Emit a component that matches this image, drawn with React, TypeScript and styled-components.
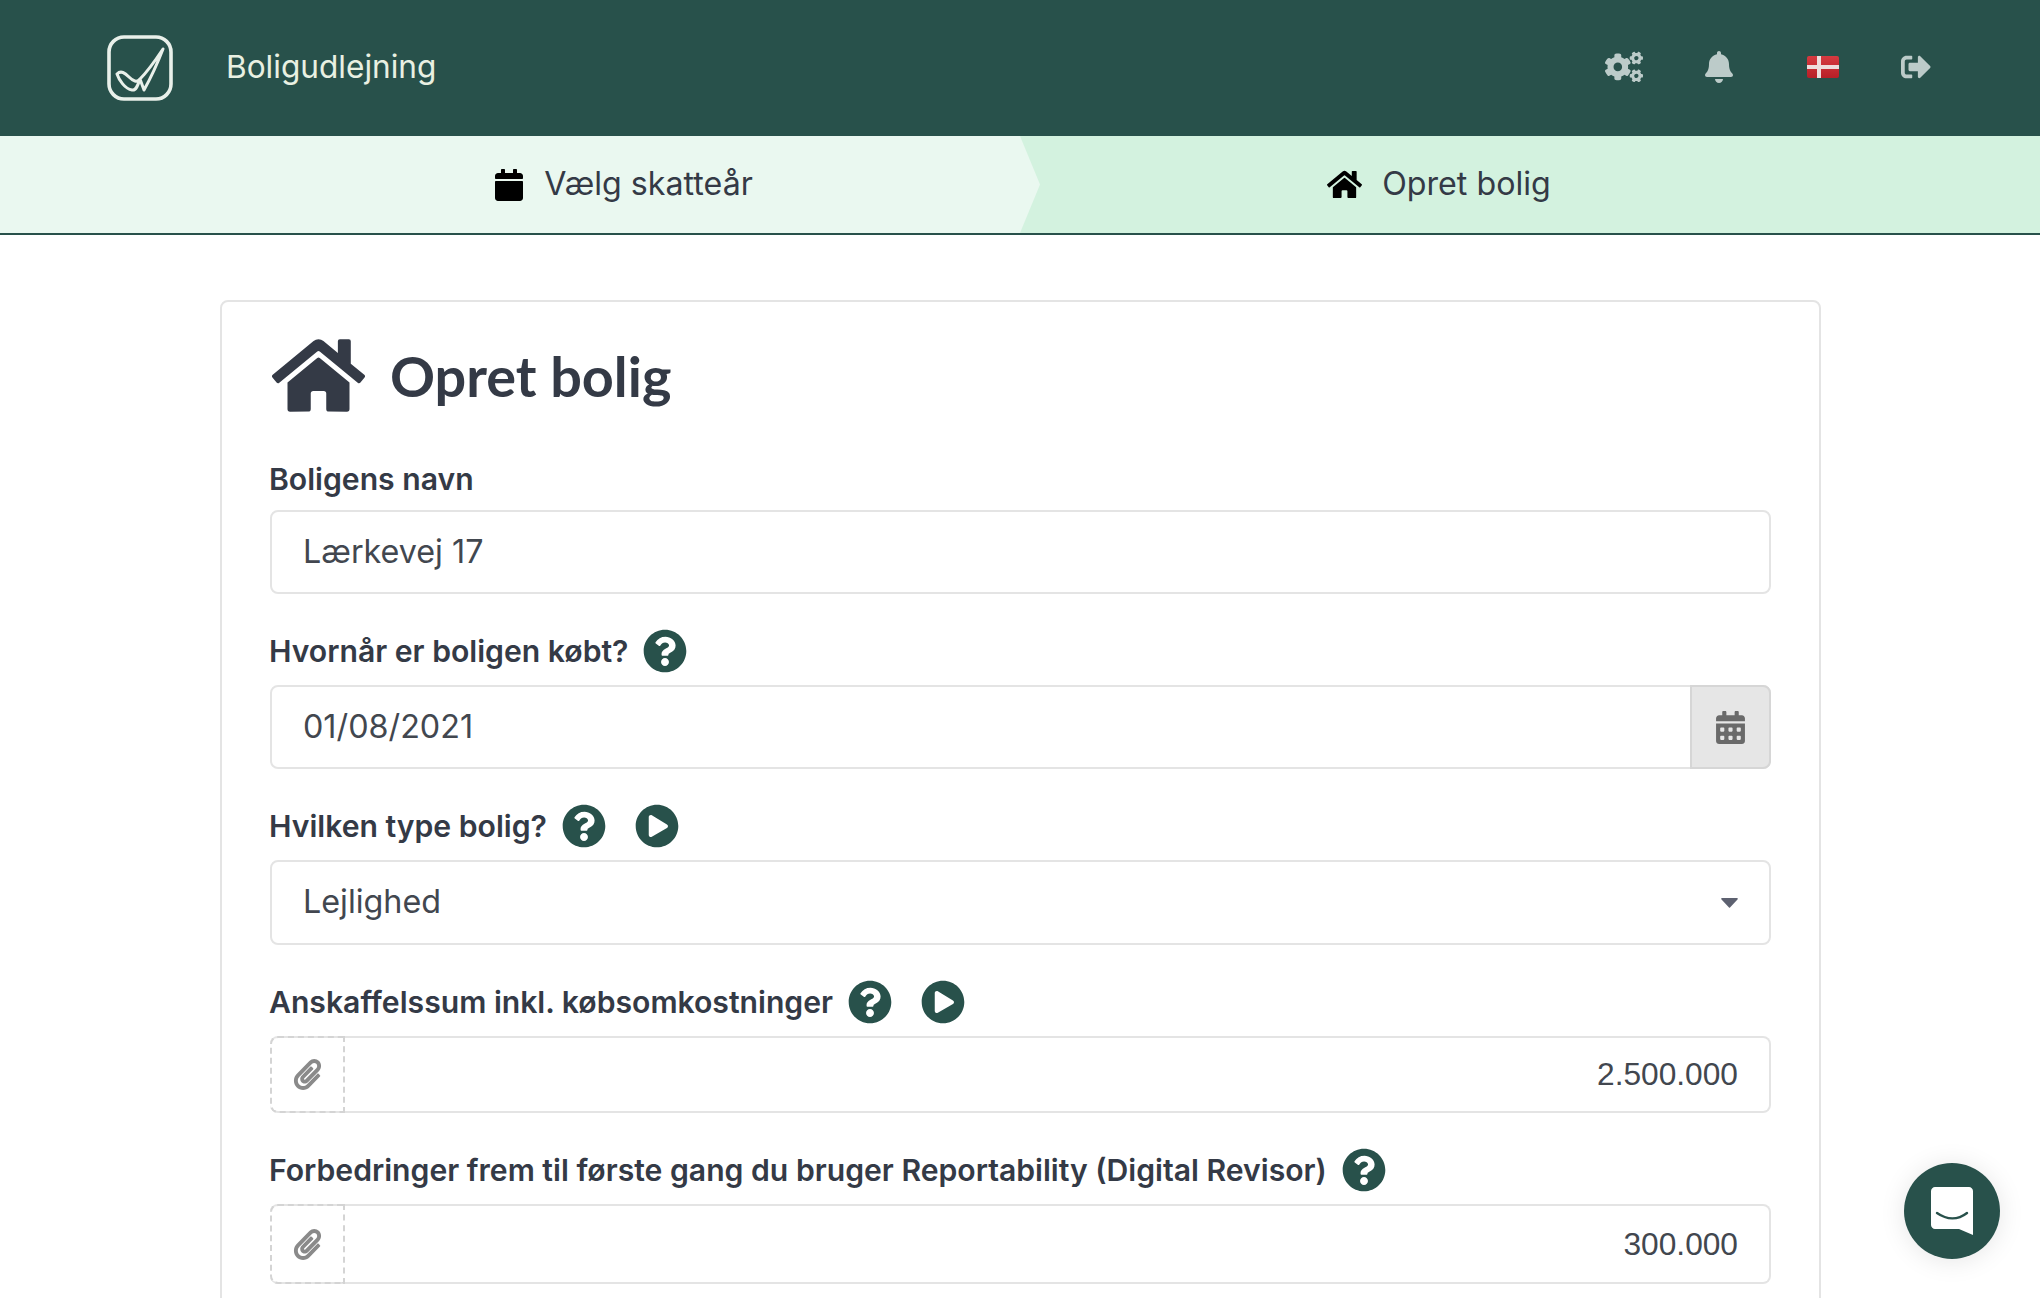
import React from 'react'
import styled, { createGlobalStyle } from 'styled-components'
import {
    FaBell,
    FaCalendar,
    FaCalendarAlt,
    FaCogs,
    FaHome,
    FaPaperclip,
    FaPlayCircle,
    FaQuestionCircle,
    FaSignOutAlt
} from 'react-icons/fa'

const GREEN = '#28514b'
const INK = '#343a46'

const Logo: React.FC = () => (
    <svg width="66" height="66" viewBox="0 0 66 66" fill="none" stroke="#e9f0ea">
        <rect x="2" y="2" width="62" height="62" rx="15" strokeWidth="3.6" />
        <path
            d="M56 14 C48 26 40 37 33 44 L37 55 C42 46 51 27 56 14 Z M10 39 C14 35 18 38 22 42 C26 46 30 48 33 44 M10 39 C12 45 18 54 25 55 C29 56 31 50 33 44"
            strokeWidth="3"
            strokeLinejoin="round"
            strokeLinecap="round"
        />
    </svg>
)

const Flag: React.FC = () => (
    <svg width="32" height="22" viewBox="0 0 32 22">
        <defs>
            <linearGradient id="flag-gloss" x1="0" y1="0" x2="0" y2="1">
                <stop offset="0" stopColor="#d63a40" />
                <stop offset="1" stopColor="#b81f27" />
            </linearGradient>
        </defs>
        <rect width="32" height="22" rx="2" fill="url(#flag-gloss)" />
        <rect x="10" width="4" height="22" fill="#eedcdc" />
        <rect y="9" width="32" height="4" fill="#eedcdc" />
    </svg>
)

const ChatIcon: React.FC = () => (
    <svg width="42" height="48" viewBox="0 0 42 48">
        <path
            d="M4 0H38C40 0 42 2 42 4V48L28 42H4C2 42 0 40 0 38V4C0 2 2 0 4 0Z"
            fill="#fff"
        />
        <path
            d="M6 26C16 33 27 33 36 26"
            fill="none"
            stroke={GREEN}
            strokeWidth="2.4"
            strokeLinecap="round"
        />
    </svg>
)

const Caret: React.FC = () => (
    <svg width="17" height="10" viewBox="0 0 17 10">
        <path d="M1 0H16C17 0 17 1 16.500 1.500L9 9.500C8.700 9.800 8.300 9.800 8 9.500L0.500 1.500C0 1 0 0 1 0Z" fill="#5d6170" />
    </svg>
)

const FieldLabel: React.FC<{
    text: string,
    help?: boolean,
    play?: boolean
}> = ({text, help, play}) => (
    <LabelRow $tall={help || play}>
        <LabelText>{text}</LabelText>
        {help && <HelpIcon size={44} />}
        {play && <PlayIcon size={44} />}
    </LabelRow>
)

const AmountField: React.FC<{ value: string, height: number }> = ({value, height}) => (
    <AmountBox $height={height}>
        <AttachBox><FaPaperclip size={31} /></AttachBox>
        <AmountValue>{value}</AmountValue>
    </AmountBox>
)

const App: React.FC = () => {
    return (
        <>
            <GlobalStyle />
            <Page>
                <Header>
                    <Logo />
                    <AppTitle>Boligudlejning</AppTitle>
                    <HeaderIcons>
                        <FaCogs size={38} />
                        <FaBell size={32} />
                        <FlagSlot><Flag /></FlagSlot>
                        <SignOutIcon size={30} />
                    </HeaderIcons>
                </Header>

                <Steps>
                    <Step $first>
                        <FaCalendar size={32} />
                        <StepLabel>Vælg skatteår</StepLabel>
                    </Step>
                    <Step>
                        <FaHome size={35} />
                        <StepLabel>Opret bolig</StepLabel>
                    </Step>
                </Steps>

                <Card>
                    <Heading>
                        <FaHome size={93} />
                        <HeadingText>Opret bolig</HeadingText>
                    </Heading>

                    <Field>
                        <FieldLabel text="Boligens navn" />
                        <Control>
                            <ControlValue>Lærkevej 17</ControlValue>
                        </Control>
                    </Field>

                    <Field>
                        <FieldLabel text="Hvornår er boligen købt?" help />
                        <Control>
                            <ControlValue>01/08/2021</ControlValue>
                            <CalendarAddon><FaCalendarAlt size={33} /></CalendarAddon>
                        </Control>
                    </Field>

                    <Field>
                        <FieldLabel text="Hvilken type bolig?" help play />
                        <Control $height={85}>
                            <ControlValue>Lejlighed</ControlValue>
                            <CaretSlot><Caret /></CaretSlot>
                        </Control>
                    </Field>

                    <Field>
                        <FieldLabel text="Anskaffelssum inkl. købsomkostninger" help play />
                        <AmountField value="2.500.000" height={77} />
                    </Field>

                    <Field>
                        <FieldLabel text="Forbedringer frem til første gang du bruger Reportability (Digital Revisor)" help />
                        <AmountField value="300.000" height={80} />
                    </Field>
                </Card>

                <ChatButton><ChatIcon /></ChatButton>
            </Page>
        </>
    )
}

export default App

const GlobalStyle = createGlobalStyle`
    html, body {
        margin: 0;
        padding: 0;
        height: 100%;
        overflow: hidden;
        background: #fff;
    }
    body {
        font-family: Inter, "Liberation Sans", sans-serif;
        color: ${INK};
    }
`

const Page = styled.div`
    height: 1298px;
    overflow: hidden;
`

const Header = styled.header`
    height: 136px;
    background: ${GREEN};
    display: flex;
    align-items: center;
    padding: 0 109px 0 107px;
    box-sizing: border-box;
`

const AppTitle = styled.div`
    margin: -3px 0 0 53px;
    font-size: 31.600px;
    color: #e9f0e2;
`

const HeaderIcons = styled.div`
    margin-left: auto;
    margin-top: -3px;
    display: flex;
    align-items: center;
    gap: 60px;
    color: #bccbc9;
`

const FlagSlot = styled.div`
    display: flex;
    margin-left: 12px;
`

const SignOutIcon = styled(FaSignOutAlt)`
    margin-left: 2px;
`

const Steps = styled.nav`
    display: flex;
    height: 99px;
    border-bottom: 2px solid ${GREEN};
    box-sizing: border-box;
`

const Step = styled.div<{ $first?: boolean }>`
    width: 50%;
    box-sizing: border-box;
    position: relative;
    display: flex;
    align-items: center;
    justify-content: center;
    gap: ${p => p.$first ? '19px' : '20px'};
    color: #000;
    background: ${p => p.$first ? '#eaf8f0' : '#d3f2df'};
    padding: ${p => p.$first ? '0 0 0 226px' : '0 182px 0 0'};

    ${p => p.$first && `
        &::after {
            content: '';
            position: absolute;
            top: 0;
            bottom: 0;
            left: 100%;
            width: 20px;
            z-index: 1;
            background: #eaf8f0;
            clip-path: polygon(0 0, 100% 50%, 0 100%);
        }
    `}
`

const StepLabel = styled.span`
    font-size: 32.200px;
    color: ${INK};
    margin-top: -2px;
`

const Card = styled.main`
    width: 1601px;
    height: 1200px;
    margin: 65px 0 0 220px;
    box-sizing: border-box;
    border: 2px solid #e4e4e4;
    border-radius: 8px;
    padding: 31px 48px 0 48px;
`

const Heading = styled.div`
    height: 84px;
    margin-bottom: 47px;
    display: flex;
    align-items: center;
    gap: 25px;
    color: ${INK};

    svg {
        margin-left: 2px;
    }
`

const HeadingText = styled.h1`
    margin: 0;
    font-family: Lato, sans-serif;
    font-weight: 700;
    font-size: 55.800px;
    color: ${INK};
`

const Field = styled.section`
    margin-bottom: 35px;
`

const LabelRow = styled.div<{ $tall?: boolean }>`
    display: flex;
    align-items: center;
    height: ${p => p.$tall ? '44px' : '30px'};
    margin-bottom: ${p => p.$tall ? '12px' : '16px'};
`

const LabelText = styled.label`
    margin: -1px 0 0 -1px;
    font-size: 30.150px;
    font-weight: 600;
    color: ${INK};
`

const HelpIcon = styled(FaQuestionCircle)`
    color: ${GREEN};
    margin-left: 15px;
`

const PlayIcon = styled(FaPlayCircle)`
    color: ${GREEN};
    margin-left: 29px;
`

const Control = styled.div<{ $height?: number }>`
    height: ${p => p.$height || 84}px;
    box-sizing: border-box;
    display: flex;
    align-items: stretch;
    border: 2px solid #e4e4e4;
    border-radius: 8px;
`

const ControlValue = styled.div`
    flex: 1;
    display: flex;
    align-items: center;
    padding: 0 0 2px 31px;
    font-size: 32.300px;
    color: #42474f;
`

const CalendarAddon = styled.div`
    width: 81px;
    margin: -2px -2px -2px 0;
    box-sizing: border-box;
    display: flex;
    align-items: center;
    justify-content: center;
    background: #e6e6e6;
    border: 2px solid #d6d6d6;
    border-radius: 0 8px 8px 0;
    color: #6a6a6a;
`

const CaretSlot = styled.div`
    display: flex;
    align-items: center;
    padding-right: 31px;
`

const AmountBox = styled.div<{ $height: number }>`
    height: ${p => p.$height}px;
    box-sizing: border-box;
    display: flex;
    align-items: stretch;
    border: 2px solid #e4e4e4;
    border-left: none;
    border-radius: 8px;
`

const AttachBox = styled.div`
    width: 75px;
    margin: -2px 0;
    box-sizing: border-box;
    display: flex;
    align-items: center;
    justify-content: center;
    border: 2px dashed #d4d4d4;
    border-radius: 8px 0 0 8px;
    color: #8a8a8a;
`

const AmountValue = styled.div`
    flex: 1;
    display: flex;
    align-items: center;
    justify-content: flex-end;
    padding-right: 31px;
    font-family: "Liberation Sans", Arial, sans-serif;
    font-size: 31.700px;
    color: #42474f;
`

const ChatButton = styled.button`
    position: fixed;
    right: 40px;
    bottom: 39px;
    width: 96px;
    height: 96px;
    padding: 0;
    border: none;
    border-radius: 50%;
    background: ${GREEN};
    box-shadow: 0 2px 26px rgba(0, 0, 0, 0.1);
    display: flex;
    align-items: center;
    justify-content: center;
`
